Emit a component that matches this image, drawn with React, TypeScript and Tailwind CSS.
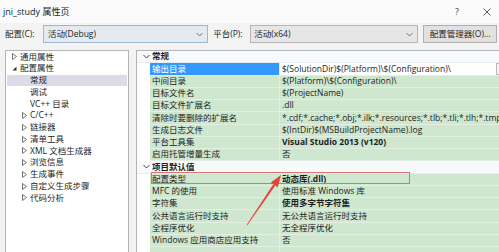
import React from "react";

type Prop = { name: string; value: string; bold?: boolean; selected?: boolean };

const group1: Prop[] = [
  { name: "输出目录", value: "$(SolutionDir)$(Platform)\\$(Configuration)\\", selected: true },
  { name: "中间目录", value: "$(Platform)\\$(Configuration)\\" },
  { name: "目标文件名", value: "$(ProjectName)" },
  { name: "目标文件扩展名", value: ".dll" },
  {
    name: "清除时要删除的扩展名",
    value: "*.cdf;*.cache;*.obj;*.ilk;*.resources;*.tlb;*.tli;*.tlh;*.tmp;*.",
  },
  { name: "生成日志文件", value: "$(IntDir)$(MSBuildProjectName).log" },
  { name: "平台工具集", value: "Visual Studio 2013 (v120)", bold: true },
  { name: "启用托管增量生成", value: "否" },
];

const group2: Prop[] = [
  { name: "配置类型", value: "动态库(.dll)", bold: true },
  { name: "MFC 的使用", value: "使用标准 Windows 库" },
  { name: "字符集", value: "使用多字节字符集", bold: true },
  { name: "公共语言运行时支持", value: "无公共语言运行时支持" },
  { name: "全程序优化", value: "无全程序优化" },
  { name: "Windows 应用商店应用支持", value: "否" },
];

type TreeItem = { label: string; level: number; arrow: "none" | "closed" | "open"; selected?: boolean };

const tree: TreeItem[] = [
  { label: "通用属性", level: 0, arrow: "closed" },
  { label: "配置属性", level: 0, arrow: "open" },
  { label: "常规", level: 1, arrow: "none", selected: true },
  { label: "调试", level: 1, arrow: "none" },
  { label: "VC++ 目录", level: 1, arrow: "none" },
  { label: "C/C++", level: 1, arrow: "closed" },
  { label: "链接器", level: 1, arrow: "closed" },
  { label: "清单工具", level: 1, arrow: "closed" },
  { label: "XML 文档生成器", level: 1, arrow: "closed" },
  { label: "浏览信息", level: 1, arrow: "closed" },
  { label: "生成事件", level: 1, arrow: "closed" },
  { label: "自定义生成步骤", level: 1, arrow: "closed" },
  { label: "代码分析", level: 1, arrow: "closed" },
];

function Chevron({ className = "" }: { className?: string }) {
  return (
    <svg width="7" height="5" viewBox="0 0 7 5" className={className}>
      <path d="M0.5 1 L3.5 4 L6.5 1" fill="none" stroke="currentColor" strokeWidth="1" />
    </svg>
  );
}

function TreeArrow({ kind }: { kind: "none" | "closed" | "open" }) {
  if (kind === "closed")
    return (
      <svg width="5" height="7" viewBox="0 0 5 7" className="shrink-0">
        <path d="M0.5 0.5 L4.5 3.5 L0.5 6.5 Z" fill="none" stroke="#666" strokeWidth="0.9" />
      </svg>
    );
  if (kind === "open")
    return (
      <svg width="5" height="7" viewBox="0 0 5 7" className="shrink-0">
        <path d="M4.5 1.5 L4.5 5.5 L0.5 5.5 Z" fill="#333" />
      </svg>
    );
  return <span className="w-[5px] shrink-0" />;
}

function Row({ p }: { p: Prop }) {
  return (
    <div className="flex h-[12.25px] border-b border-[#e2efe2]">
      <div
        className={
          "w-[130px] shrink-0 pl-[2px] flex items-center whitespace-nowrap overflow-hidden border-r border-[#e2efe2] " +
          (p.selected ? "bg-[#3399ff] text-white" : "bg-[#cfe6cf] text-[#1e1e1e]")
        }
      >
        {p.name}
      </div>
      <div
        className={
          "flex-1 min-w-0 flex items-center pl-[2px] whitespace-nowrap overflow-hidden relative " +
          (p.selected ? "bg-white" : "bg-[#cfe6cf]") +
          (p.bold ? " font-bold" : "")
        }
      >
        <span className="text-[#1e1e1e]">{p.value}</span>
        {p.selected && (
          <div className="absolute right-[1px] top-[0px] h-[12px] w-[14px] border border-[#b9b9b9] bg-[#f4f4f4] flex items-center justify-center text-[#707070]">
            <Chevron />
          </div>
        )}
      </div>
    </div>
  );
}

function Header({ label }: { label: string }) {
  return (
    <div className="flex items-center h-[12.25px] bg-[#f7f9fa] border-b border-[#e6ecef]">
      <span className="w-[15px] flex justify-center pl-[3px] text-[#444]">
        <Chevron />
      </span>
      <span className="font-bold text-[#1e1e1e]">{label}</span>
    </div>
  );
}

export default function App() {
  return (
    <div
      className="relative w-[499px] h-[252px] overflow-hidden bg-[#f3f3f3] text-[8.5px] leading-none text-[#1e1e1e]"
      style={{ fontFamily: '"Open Sans", "Noto Sans CJK SC", sans-serif' }}
    >
      {/* Title bar */}
      <div className="h-[23px] bg-[#fbfbfb] flex items-center pl-[3px] pr-[8px]">
        <span className="text-[9px] text-[#222]">jni_study 属性页</span>
        <span className="ml-auto text-[9px] text-[#444] mr-[24px]">?</span>
        <svg width="8" height="8" viewBox="0 0 8 8" className="text-[#444]">
          <path d="M0.5 0.5 L7.5 7.5 M7.5 0.5 L0.5 7.5" stroke="currentColor" strokeWidth="0.9" />
        </svg>
      </div>

      {/* Config row */}
      <div className="flex items-center h-[22px] pl-[5px] pr-[2px]">
        <span className="w-[38px] shrink-0">配置(C):</span>
        <div className="w-[166px] h-[18px] border border-[#9fb8cf] bg-[#e4eaf0] flex items-center pl-[4px] pr-[4px]">
          <span>活动(Debug)</span>
          <Chevron className="ml-auto text-[#777]" />
        </div>
        <span className="ml-[5px] w-[37px] shrink-0">平台(P):</span>
        <div className="w-[169px] h-[18px] border border-[#b5b5b5] bg-[#e6e6e6] flex items-center pl-[3px] pr-[4px]">
          <span>活动(x64)</span>
          <Chevron className="ml-auto text-[#777]" />
        </div>
        <div className="ml-[5px] w-[74px] h-[18px] border border-[#b0b0b0] bg-[#e1e1e1] flex items-center justify-center">
          配置管理器(O)...
        </div>
      </div>

      {/* Panels */}
      <div className="flex pl-[5px] pt-[5px] h-[207px]">
        <div className="w-[124px] shrink-0 h-full border border-b-0 border-[#b4b4b4] bg-white px-[1px]">
          {tree.map((t, i) => (
            <div
              key={i}
              className={
                "flex items-center h-[11.75px] whitespace-nowrap " + (t.selected ? "bg-[#dcdce8]" : "")
              }
              style={{ paddingLeft: t.level === 0 ? 5 : 15 }}
            >
              <TreeArrow kind={t.arrow} />
              <span className="ml-[3px]">{t.label}</span>
            </div>
          ))}
        </div>

        <div className="ml-[7px] flex-1 h-full border-l border-t border-[#b4b4b4] bg-white">
          <Header label="常规" />
          <div className="pl-[13px]">
            {group1.map((p, i) => (
              <Row key={i} p={p} />
            ))}
          </div>
          <Header label="项目默认值" />
          <div className="pl-[13px]">
            {group2.map((p, i) => (
              <Row key={i} p={p} />
            ))}
            <Row p={{ name: "", value: "" }} />
          </div>
        </div>
      </div>

      {/* Annotation: red box */}
      <div className="absolute left-[151px] top-[172px] w-[259px] h-[12px] border border-[#d9707a]" />

      {/* Annotation: red arrow */}
      <svg className="absolute left-0 top-0 pointer-events-none" width="499" height="252" viewBox="0 0 499 252">
        <polygon points="247.3,225.2 246.7,224.8 273.3,184.2 275.3,185.6" fill="#e8403a" />
        <polygon points="281,175 277.8,187.3 270.8,182.5" fill="#e8403a" />
      </svg>
    </div>
  );
}
